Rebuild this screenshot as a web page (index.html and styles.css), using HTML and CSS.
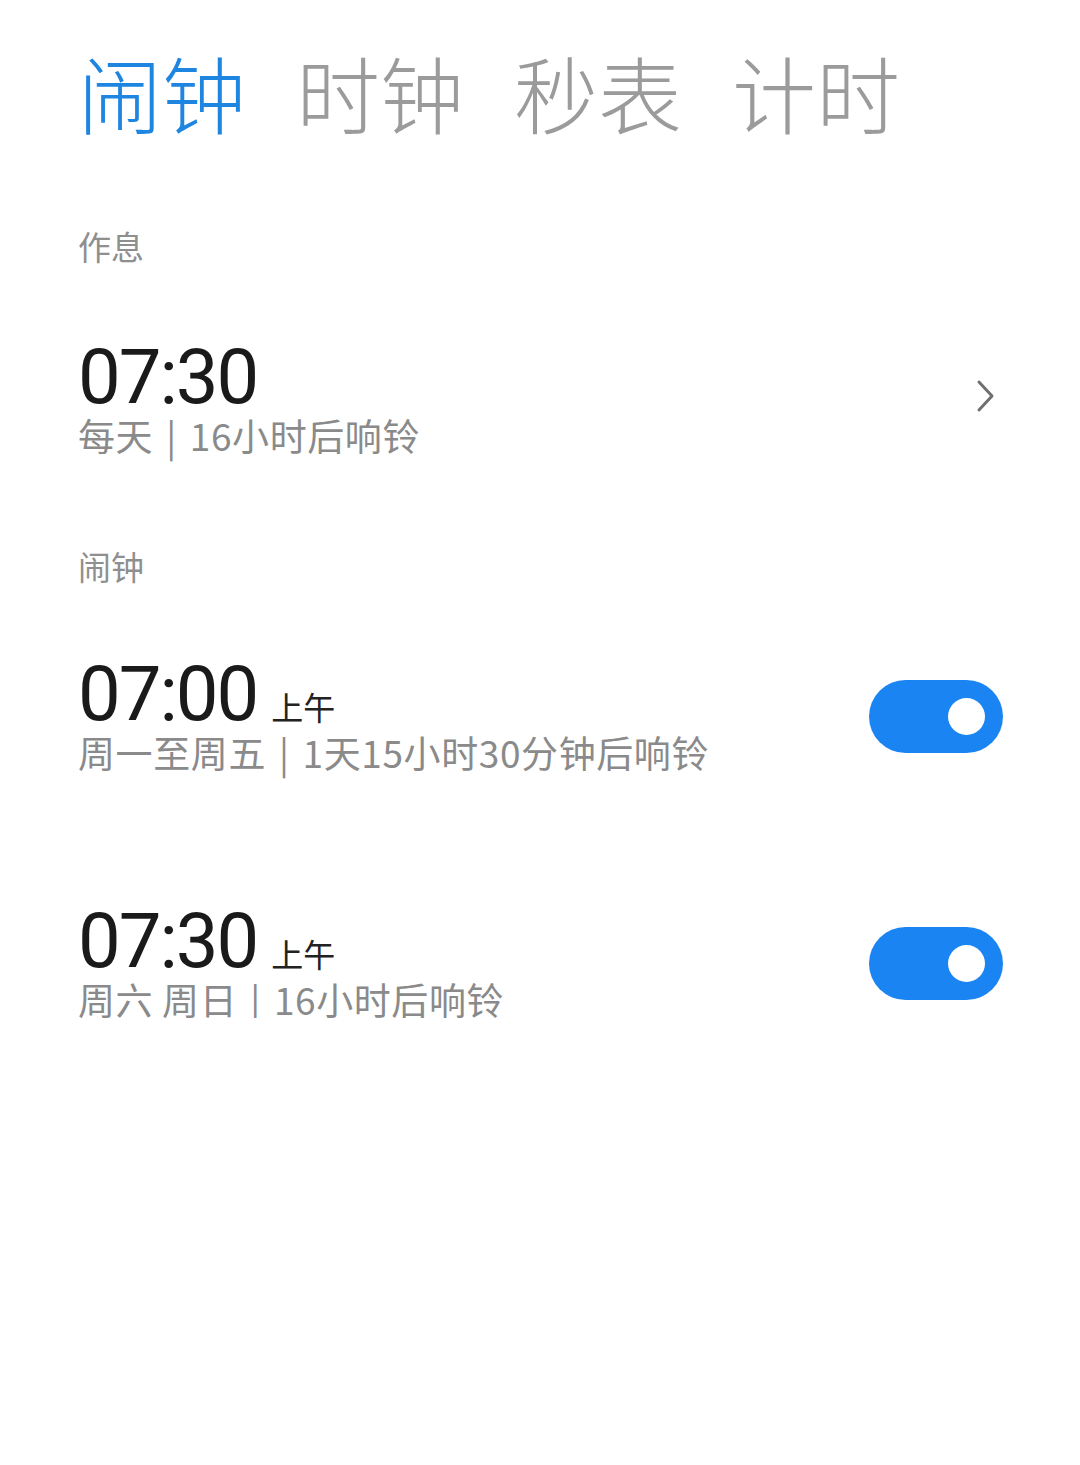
FILE: index.html
```html
<!DOCTYPE html>
<html lang="zh-CN">
<head>
    <meta charset="UTF-8">
    <meta name="viewport" content="width=device-width, initial-scale=1.0">
    <title>闹钟</title>
    <link rel="stylesheet" href="styles.css">
</head>
<body>
    <!-- Horní záložky -->
    <nav class="tabs">
        <span class="tab active">闹钟</span>
        <span class="tab">时钟</span>
        <span class="tab">秒表</span>
        <span class="tab">计时</span>
    </nav>

    <main class="content">
        <section class="group">
            <h2 class="group-title">作息</h2>
            <div class="alarm">
                <div class="alarm-info">
                    <div class="alarm-time">07:30</div>
                    <div class="alarm-desc">每天<span class="sep">|</span>16小时后响铃</div>
                </div>
                <svg class="chevron" width="22" height="34" viewBox="0 0 22 34">
                    <path d="M4 3 L17 17 L4 31" fill="none" stroke="#707070" stroke-width="3" stroke-linecap="round" stroke-linejoin="round"/>
                </svg>
            </div>
        </section>

        <section class="group">
            <h2 class="group-title">闹钟</h2>
            <div class="alarm">
                <div class="alarm-info">
                    <div class="alarm-time">07:00<span class="ampm">上午</span></div>
                    <div class="alarm-desc">周一至周五<span class="sep">|</span>1天15小时30分钟后响铃</div>
                </div>
                <div class="switch on"><span class="knob"></span></div>
            </div>
            <div class="alarm">
                <div class="alarm-info">
                    <div class="alarm-time">07:30<span class="ampm">上午</span></div>
                    <div class="alarm-desc">周六 周日<span class="sep">|</span>16小时后响铃</div>
                </div>
                <div class="switch on"><span class="knob"></span></div>
            </div>
        </section>
    </main>
</body>
</html>
```

FILE: styles.css
```css
/* Reset */
* {
    margin: 0;
    padding: 0;
    box-sizing: border-box;
}

body {
    font-family: "Noto Sans CJK SC", "Noto Sans", sans-serif;
    background-color: #fff;
    color: #1a1a1a;
}

/* Záložky nahoře */
.tabs {
    display: flex;
    gap: 50px;
    padding: 50px 78px 0;
    font-size: 84px;
    line-height: 1;
    font-weight: 300;
}

.tab {
    color: #9b9b9b;
}

.tab.active {
    color: #1e86e0;
}

.content {
    padding: 0 77px 0 78px;
}

/* Skupiny */
.group-title {
    margin-top: 96px;
    font-size: 33px;
    line-height: 1;
    font-weight: 400;
    color: #8f8f8f;
}

.alarm {
    display: flex;
    align-items: center;
    justify-content: space-between;
    margin-top: 76px;
}

.group + .group .alarm:first-of-type {
    margin-top: 73px;
}

.alarm + .alarm {
    margin-top: 132px;
}

.alarm-time {
    font-family: Roboto, "Noto Sans", sans-serif;
    font-size: 76px;
    line-height: 1;
    letter-spacing: -2px;
    color: #1a1a1a;
}

.ampm {
    margin-left: 14px;
    font-family: "Noto Sans CJK SC", sans-serif;
    font-size: 32px;
    letter-spacing: 0;
    color: #222;
}

.alarm-desc {
    margin-top: 2px;
    font-size: 37px;
    line-height: 1;
    letter-spacing: 0.6px;
    color: #8a8a8a;
}

.sep {
    margin: 0 13px;
}

.chevron {
    margin-right: 6px;
    margin-top: -2px;
}

/* Přepínač */
.switch {
    position: relative;
    width: 134px;
    height: 73px;
    border-radius: 37px;
    background-color: #1a84f2;
    margin-top: 6px;
}

.knob {
    position: absolute;
    top: 18px;
    right: 18px;
    width: 37px;
    height: 37px;
    border-radius: 50%;
    background-color: #fff;
}
```
